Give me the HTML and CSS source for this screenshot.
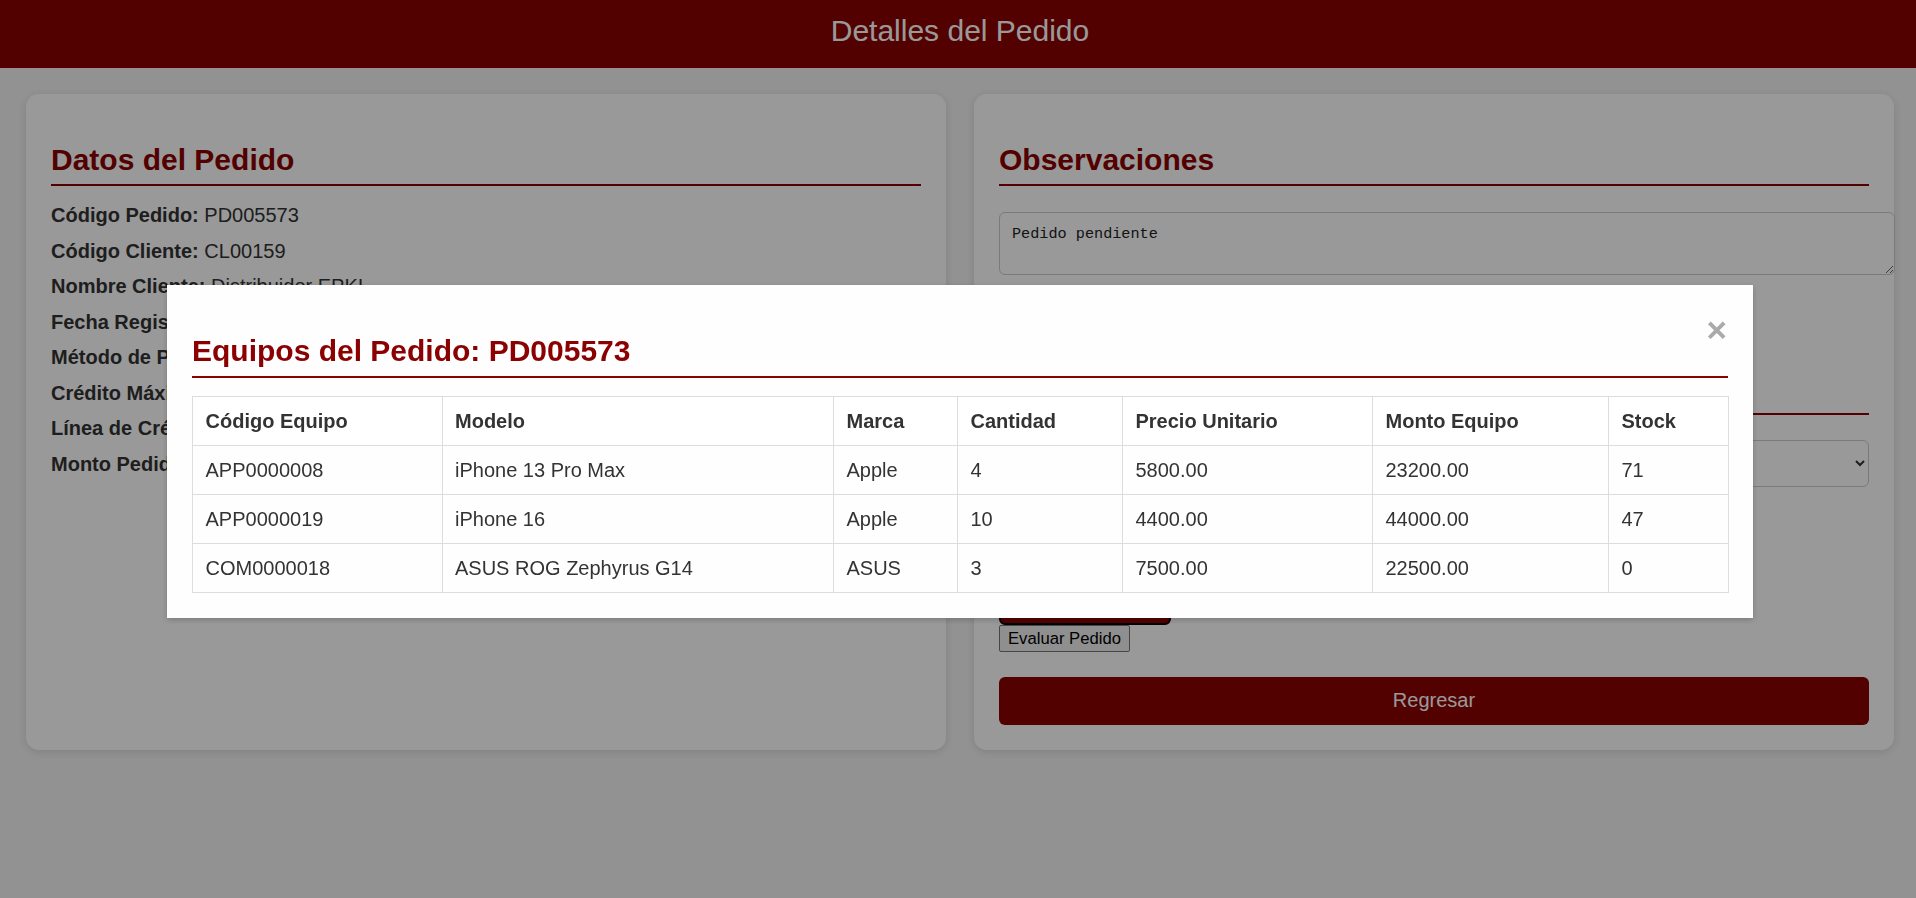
FILE: index.html
```html
<!DOCTYPE html>
<html lang="es">
<head>
<meta charset="utf-8">
<title>Detalles del Pedido</title>
<link rel="stylesheet" href="styles.css">
</head>
<body>
<header class="topbar">
  <h1 class="topbar-title">Detalles del Pedido</h1>
</header>

<main class="layout">
  <section class="card">
    <h2 class="card-title">Datos del Pedido</h2>
    <p class="field"><strong>Código Pedido:</strong> PD005573</p>
    <p class="field"><strong>Código Cliente:</strong> CL00159</p>
    <p class="field"><strong>Nombre Cliente:</strong> Distribuidor EPKI</p>
    <p class="field"><strong>Fecha Registro:</strong> 2025-05-12</p>
    <p class="field"><strong>Método de Pago:</strong> Crédito</p>
    <p class="field"><strong>Crédito Máximo:</strong> 150000.00</p>
    <p class="field"><strong>Línea de Crédito:</strong> 120000.00</p>
    <p class="field"><strong>Monto Pedido:</strong> 89700.00</p>
  </section>

  <section class="card">
    <h2 class="card-title">Observaciones</h2>
    <textarea class="notes">Pedido pendiente</textarea>
    <h2 class="card-title section-gap">Evaluación</h2>
    <select class="status-select">
      <option>Seleccione un estado</option>
    </select>
    <button class="btn-outline-red">Ver Equipos</button>
    <button class="btn-default">Evaluar Pedido</button>
    <button class="btn-primary btn-back">Regresar</button>
  </section>
</main>

<div class="overlay">
  <div class="modal">
    <span class="modal-close">&times;</span>
    <h2 class="card-title modal-title">Equipos del Pedido: PD005573</h2>
    <table class="items">
      <thead>
        <tr>
          <th class="c-code">Código Equipo</th>
          <th class="c-model">Modelo</th>
          <th class="c-brand">Marca</th>
          <th class="c-qty">Cantidad</th>
          <th class="c-price">Precio Unitario</th>
          <th class="c-amount">Monto Equipo</th>
          <th class="c-stock">Stock</th>
        </tr>
      </thead>
      <tbody>
        <tr>
          <td>APP0000008</td><td>iPhone 13 Pro Max</td><td>Apple</td><td>4</td><td>5800.00</td><td>23200.00</td><td>71</td>
        </tr>
        <tr>
          <td>APP0000019</td><td>iPhone 16</td><td>Apple</td><td>10</td><td>4400.00</td><td>44000.00</td><td>47</td>
        </tr>
        <tr>
          <td>COM0000018</td><td>ASUS ROG Zephyrus G14</td><td>ASUS</td><td>3</td><td>7500.00</td><td>22500.00</td><td>0</td>
        </tr>
      </tbody>
    </table>
  </div>
</div>
</body>
</html>
```

FILE: styles.css
```css
* {
  box-sizing: border-box;
}

html, body {
  margin: 0;
  padding: 0;
}

body {
  font-family: "Liberation Sans", Arial, sans-serif;
  font-size: 20px;
  color: #333;
  background: #f4f4f4;
  min-height: 898px;
}

.topbar {
  background: #8b0000;
  color: #fff;
  height: 68px;
  padding-top: 14px;
  text-align: center;
}

.topbar-title {
  margin: 0 0 0 4px;
  font-size: 30px;
  font-weight: normal;
  line-height: 34.5px;
}

.layout {
  display: grid;
  grid-template-columns: 1fr 1fr;
  gap: 28px;
  padding: 26px 22px 0 26px;
}

.card {
  background: #fff;
  border-radius: 12.5px;
  padding: 25px;
  box-shadow: 0 2px 10px rgba(0, 0, 0, 0.12);
}

.card-title {
  margin: 24px 0 18.5px;
  padding-bottom: 6px;
  border-bottom: 2px solid #8b0000;
  color: #8b0000;
  font-size: 30px;
  line-height: 34.5px;
  font-weight: bold;
}

.field {
  margin: 12.5px 0;
  line-height: 23px;
}

.field strong {
  color: #333;
}

.notes {
  display: block;
  width: calc(100% + 26px);
  height: 63.5px;
  margin: 26px 0 0;
  padding: 12px;
  border: 1px solid #ccc;
  border-radius: 6px;
  font-family: "Liberation Mono", "DejaVu Sans Mono", monospace;
  font-size: 15.2px;
  color: #222;
  background: #fff;
  resize: vertical;
}

.btn-primary {
  display: block;
  width: 100%;
  height: 48px;
  border: none;
  border-radius: 6px;
  background: #8b0000;
  color: #fff;
  font-family: "Liberation Sans", Arial, sans-serif;
  font-size: 20px;
}

.section-gap {
  margin-top: 97.5px;
}

.status-select {
  display: block;
  width: 100%;
  height: 47px;
  margin-top: 24.5px;
  padding: 0 12px;
  border: 1px solid #ccc;
  border-radius: 6px;
  background: #fff;
  font-family: "Liberation Sans", Arial, sans-serif;
  font-size: 20px;
  color: #333;
}

.btn-outline-red {
  display: block;
  width: 172px;
  height: 46px;
  margin-top: 92px;
  border: 2px solid #000;
  border-radius: 6px;
  background: #8b0000;
  color: #fff;
  font-family: "Liberation Sans", Arial, sans-serif;
  font-size: 20px;
}

.btn-default {
  display: block;
  height: 27px;
  padding: 2px 8px;
  border: 1px solid #767676;
  border-radius: 2px;
  background: #efefef;
  color: #000;
  font-family: "Liberation Sans", Arial, sans-serif;
  font-size: 16.67px;
  line-height: 21px;
}

.btn-back {
  margin-top: 25px;
}

.overlay {
  position: fixed;
  inset: 0;
  background: rgba(0, 0, 0, 0.4);
}

.modal {
  width: 1586px;
  margin: 285px 0 0 167px;
  padding: 25px;
  background: #fefefe;
  box-shadow: 0 2px 6px rgba(0, 0, 0, 0.2);
}

.modal-close {
  float: right;
  color: #aaa;
  font-size: 35px;
  font-weight: bold;
  line-height: 40px;
  margin-right: 1px;
}

.modal-title {
  margin-top: 24px;
  padding-bottom: 7px;
}

.items {
  width: 100%;
  border-collapse: collapse;
  table-layout: fixed;
}

.items th,
.items td {
  padding: 12.5px;
  border: 1px solid #ddd;
  text-align: left;
  line-height: 23px;
  color: #333;
  font-size: 20px;
}

.items th {
  font-weight: bold;
  background: #fff;
}

.c-code { width: 249.5px; }
.c-model { width: 391.5px; }
.c-brand { width: 124px; }
.c-qty { width: 165px; }
.c-price { width: 250px; }
.c-amount { width: 236px; }
.c-stock { width: 120px; }
```
